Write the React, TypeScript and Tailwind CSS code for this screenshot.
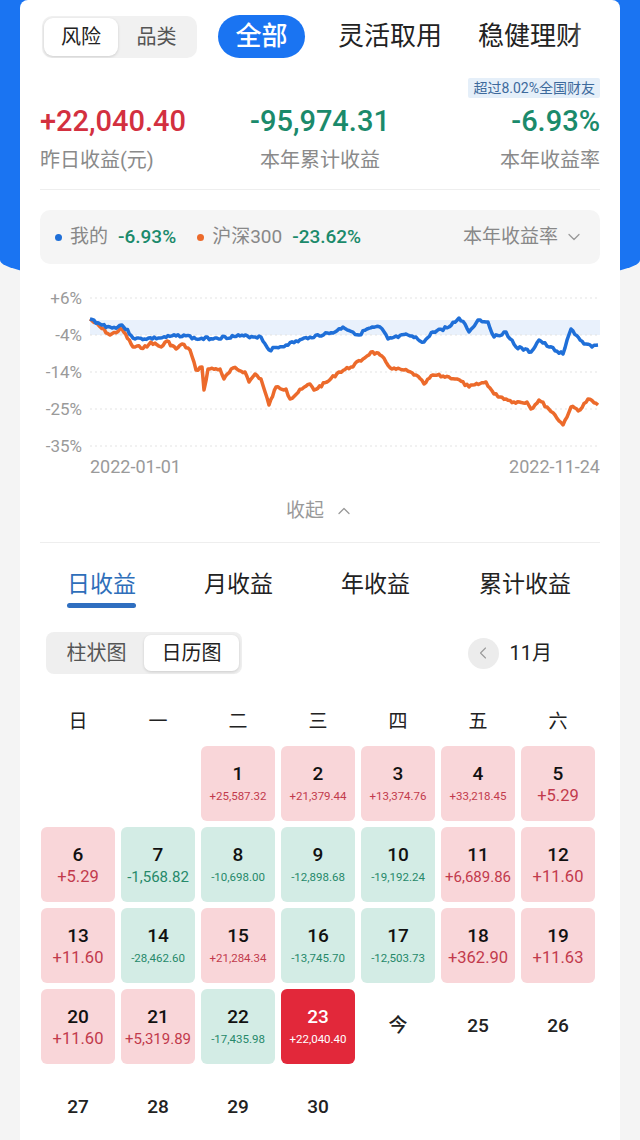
import { ChevronDown, ChevronLeft, ChevronUp } from "lucide-react";

type Day = { day: string; value?: string; kind?: "up" | "down" | "hot"; size?: "xs" | "md" | "lg" };

const week = ["日", "一", "二", "三", "四", "五", "六"];

const days: Day[] = [
  { day: "" },
  { day: "" },
  { day: "1", value: "+25,587.32", kind: "up", size: "xs" },
  { day: "2", value: "+21,379.44", kind: "up", size: "xs" },
  { day: "3", value: "+13,374.76", kind: "up", size: "xs" },
  { day: "4", value: "+33,218.45", kind: "up", size: "xs" },
  { day: "5", value: "+5.29", kind: "up", size: "lg" },
  { day: "6", value: "+5.29", kind: "up", size: "lg" },
  { day: "7", value: "-1,568.82", kind: "down", size: "md" },
  { day: "8", value: "-10,698.00", kind: "down", size: "xs" },
  { day: "9", value: "-12,898.68", kind: "down", size: "xs" },
  { day: "10", value: "-19,192.24", kind: "down", size: "xs" },
  { day: "11", value: "+6,689.86", kind: "up", size: "md" },
  { day: "12", value: "+11.60", kind: "up", size: "lg" },
  { day: "13", value: "+11.60", kind: "up", size: "lg" },
  { day: "14", value: "-28,462.60", kind: "down", size: "xs" },
  { day: "15", value: "+21,284.34", kind: "up", size: "xs" },
  { day: "16", value: "-13,745.70", kind: "down", size: "xs" },
  { day: "17", value: "-12,503.73", kind: "down", size: "xs" },
  { day: "18", value: "+362.90", kind: "up", size: "lg" },
  { day: "19", value: "+11.63", kind: "up", size: "lg" },
  { day: "20", value: "+11.60", kind: "up", size: "lg" },
  { day: "21", value: "+5,319.89", kind: "up", size: "md" },
  { day: "22", value: "-17,435.98", kind: "down", size: "xs" },
  { day: "23", value: "+22,040.40", kind: "hot", size: "xs" },
  { day: "今" },
  { day: "25" },
  { day: "26" },
  { day: "27" },
  { day: "28" },
  { day: "29" },
  { day: "30" },
];

const blue: [number, number][] = [
  [90, 317], [100, 322], [112, 326], [122, 323], [135, 337], [160, 336], [184, 333], [196, 337],
  [215, 336], [240, 334], [261, 335], [269, 348], [286, 343], [310, 335], [335, 330], [343, 325],
  [359, 333], [367, 327], [380, 325], [388, 337], [408, 333], [424, 340], [433, 330], [449, 325],
  [459, 316], [465, 322], [469, 330], [478, 318], [488, 320], [494, 335], [506, 330], [516, 345],
  [531, 350], [539, 338], [549, 345], [563, 352], [571, 327], [584, 342], [592, 345], [598, 343],
];

const orange: [number, number][] = [
  [90, 317], [110, 333], [122, 327], [133, 345], [147, 345], [151, 340], [161, 345], [167, 339],
  [176, 347], [182, 342], [190, 348], [196, 368], [202, 365], [204, 388], [208, 367], [220, 367],
  [224, 377], [233, 366], [245, 370], [249, 380], [255, 372], [261, 377], [269, 403], [276, 385],
  [286, 387], [290, 397], [302, 387], [310, 382], [314, 388], [327, 380], [339, 370], [351, 365],
  [363, 357], [371, 350], [380, 353], [392, 367], [404, 368], [416, 373], [424, 382], [433, 373],
  [449, 375], [457, 377], [469, 385], [486, 380], [494, 392], [506, 397], [514, 400], [527, 400],
  [531, 407], [539, 398], [547, 405], [555, 413], [563, 423], [571, 405], [580, 408], [588, 397],
  [598, 403],
];

function rng(seed: number) {
  let s = seed;
  return () => {
    s = (s * 9301 + 49297) % 233280;
    return s / 233280;
  };
}

function makePath(pts: [number, number][], seed: number) {
  const r = rng(seed);
  let d = `M${pts[0][0]},${pts[0][1]}`;
  for (let i = 1; i < pts.length; i++) {
    const [x0, y0] = pts[i - 1];
    const [x1, y1] = pts[i];
    const steps = Math.max(1, Math.round((x1 - x0) / 2));
    for (let k = 1; k <= steps; k++) {
      const t = k / steps;
      const x = x0 + (x1 - x0) * t;
      const y = y0 + (y1 - y0) * t + (k < steps ? (r() - 0.5) * 3 : 0);
      d += ` L${x.toFixed(1)},${y.toFixed(1)}`;
    }
  }
  return d;
}

function Chart() {
  const grid = [
    { y: 296, label: "+6%" },
    { y: 333, label: "-4%" },
    { y: 370, label: "-14%" },
    { y: 407, label: "-25%" },
    { y: 444, label: "-35%" },
  ];
  return (
    <svg viewBox="40 283 560 195" className="mt-[21px] block h-[195px] w-[560px]">
      <rect x="90" y="318" width="510" height="15" fill="#e9f1fc" />
      {grid.map((g) => (
        <g key={g.label}>
          <line x1="90" x2="600" y1={g.y} y2={g.y} stroke="#e3e3e3" strokeDasharray="2 3" />
          <text x="82" y={g.y + 6} textAnchor="end" fontSize="17" fill="#9a9a9a">
            {g.label}
          </text>
        </g>
      ))}
      <path d={makePath(orange, 7)} fill="none" stroke="#ec6a2b" strokeWidth="3.5" strokeLinejoin="round" />
      <path d={makePath(blue, 3)} fill="none" stroke="#1f6fd8" strokeWidth="3.5" strokeLinejoin="round" />
      <text x="90" y="471" fontSize="18" fill="#9a9a9a">
        2022-01-01
      </text>
      <text x="600" y="471" fontSize="18" fill="#9a9a9a" textAnchor="end">
        2022-11-24
      </text>
    </svg>
  );
}

function DayCell({ d }: { d: Day }) {
  if (!d.day) return <div className="h-[75px]" />;
  if (!d.value)
    return (
      <div className="flex h-[75px] items-center justify-center text-[19px] font-medium text-[#222]">
        {d.day}
      </div>
    );
  const bg = d.kind === "hot" ? "bg-[#e2283a]" : d.kind === "up" ? "bg-[#f9d6d9]" : "bg-[#d3ece5]";
  const fg = d.kind === "hot" ? "text-white" : d.kind === "up" ? "text-[#c23a4c]" : "text-[#26896a]";
  const size = d.size === "xs" ? "text-[11.5px]" : d.size === "md" ? "text-[15px]" : "text-[16.5px]";
  return (
    <div className={`flex h-[75px] flex-col items-center justify-center rounded-[6px] ${bg}`}>
      <span className={`text-[19px] font-medium leading-[24px] ${d.kind === "hot" ? "text-white" : "text-[#111]"}`}>
        {d.day}
      </span>
      <span className={`leading-[20px] ${size} ${fg}`}>{d.value}</span>
    </div>
  );
}

export default function App() {
  return (
    <div className="relative min-h-[1140px] overflow-hidden bg-[#f4f4f4] font-['Roboto','Noto_Sans_CJK_SC',sans-serif]">
      <div className="absolute inset-x-0 top-0 h-[290px] rounded-b-[50%_30px] bg-[#1a74f2]" />
      <div className="relative mx-5 rounded-t-[8px] bg-white px-5 pb-6 pt-[15px]">
        {/* top tabs */}
        <div className="relative flex h-[43px] items-center overflow-hidden">
          <div className="ml-[2px] flex h-[42px] w-[155px] items-center rounded-[10px] bg-[#f1f1f1] p-[2px]">
            <div className="flex h-[38px] w-[74px] items-center justify-center rounded-[9px] bg-white text-[20px] text-[#222] shadow-[0_1px_3px_rgba(0,0,0,0.15)]">
              风险
            </div>
            <div className="flex flex-1 items-center justify-center text-[20px] text-[#555]">品类</div>
          </div>
          <div className="ml-[21px] flex h-[43px] w-[87px] items-center justify-center rounded-full bg-[#1a74f2] text-[26px] font-medium text-white">
            全部
          </div>
          <div className="ml-[33px] shrink-0 text-[26px] text-[#222]">灵活取用</div>
          <div className="ml-[36px] shrink-0 text-[26px] text-[#222]">稳健理财</div>
          <div className="absolute inset-y-0 right-0 w-[28px] bg-gradient-to-l from-white to-transparent" />
        </div>

        <div className="mt-[20px] flex justify-end">
          <span className="h-[20px] rounded-[2px] bg-[#e5eff9] px-[5px] text-[14px] leading-[20px] text-[#3d6a9c]">
            超过8.02%全国财友
          </span>
        </div>

        {/* stats */}
        <div className="mt-[6px] grid grid-cols-3">
          <div className="flex flex-col items-start">
            <span className="text-[29px] font-medium leading-[34px] text-[#d3303f]">+22,040.40</span>
            <span className="mt-[8px] text-[20px] leading-[28px] text-[#8a8a8a]">昨日收益(元)</span>
          </div>
          <div className="flex flex-col items-center">
            <span className="text-[29px] font-medium leading-[34px] text-[#1b8a6b]">-95,974.31</span>
            <span className="mt-[8px] text-[20px] leading-[28px] text-[#8a8a8a]">本年累计收益</span>
          </div>
          <div className="flex flex-col items-end">
            <span className="text-[29px] font-medium leading-[34px] text-[#1b8a6b]">-6.93%</span>
            <span className="mt-[8px] text-[20px] leading-[28px] text-[#8a8a8a]">本年收益率</span>
          </div>
        </div>

        <div className="mt-[15px] h-px bg-[#eeeeee]" />

        {/* legend */}
        <div className="mt-[20px] flex h-[54px] items-center rounded-[10px] bg-[#f5f5f5] pl-[15px] pr-[16px]">
          <span className="h-[7px] w-[7px] rounded-full bg-[#1f6fd8]" />
          <span className="ml-[8px] text-[19px] text-[#888]">我的</span>
          <span className="ml-[10px] text-[19px] font-medium text-[#1b8a6b]">-6.93%</span>
          <span className="ml-[21px] h-[7px] w-[7px] rounded-full bg-[#ec6a2b]" />
          <span className="ml-[8px] text-[19px] text-[#888]">沪深300</span>
          <span className="ml-[10px] text-[19px] font-medium text-[#1b8a6b]">-23.62%</span>
          <span className="ml-auto text-[19px] text-[#888]">本年收益率</span>
          <ChevronDown className="ml-[6px] h-[20px] w-[20px] text-[#999]" strokeWidth={1.5} />
        </div>

        <Chart />

        <div className="mt-[17px] flex items-center justify-center text-[19px] leading-[28px] text-[#999]">
          收起
          <ChevronUp className="ml-[10px] h-[20px] w-[20px]" strokeWidth={1.5} />
        </div>

        <div className="mt-[17px] h-px bg-[#eeeeee]" />

        {/* tabs */}
        <div className="mt-[27px] flex gap-[68px] pl-[27px]">
          <div className="flex flex-col">
            <span className="text-[23px] leading-[30px] text-[#2f6fba]">日收益</span>
            <span className="mt-[3px] h-[5px] rounded-full bg-[#2f6fc0]" />
          </div>
          <span className="text-[23px] leading-[30px] text-[#222]">月收益</span>
          <span className="text-[23px] leading-[30px] text-[#222]">年收益</span>
          <span className="ml-[1px] text-[23px] leading-[30px] text-[#222]">累计收益</span>
        </div>

        {/* view switch */}
        <div className="mt-[24px] flex items-center">
          <div className="ml-[6px] flex h-[42px] w-[196px] items-center rounded-[8px] bg-[#efefef] p-[3px]">
            <div className="flex flex-1 items-center justify-center text-[20px] text-[#555]">柱状图</div>
            <div className="flex h-[36px] w-[95px] items-center justify-center rounded-[7px] bg-white text-[20px] text-[#222] shadow-[0_1px_3px_rgba(0,0,0,0.15)]">
              日历图
            </div>
          </div>
          <div className="ml-auto mr-[48px] flex items-center">
            <div className="flex h-[31px] w-[31px] items-center justify-center rounded-full bg-[#ececec]">
              <ChevronLeft className="h-[20px] w-[20px] text-[#999]" strokeWidth={1.3} />
            </div>
            <span className="ml-[11px] text-[20px] text-[#222]">11月</span>
          </div>
        </div>

        {/* calendar */}
        <div className="mt-[34px] grid grid-cols-7 gap-x-[6px] pl-[1px] pr-[5px]">
          {week.map((w) => (
            <div key={w} className="text-center text-[19px] leading-[28px] text-[#222]">
              {w}
            </div>
          ))}
        </div>
        <div className="mt-[10px] grid grid-cols-7 gap-x-[6px] gap-y-[6px] pl-[1px] pr-[5px]">
          {days.map((d, i) => (
            <DayCell key={i} d={d} />
          ))}
        </div>
      </div>
    </div>
  );
}
